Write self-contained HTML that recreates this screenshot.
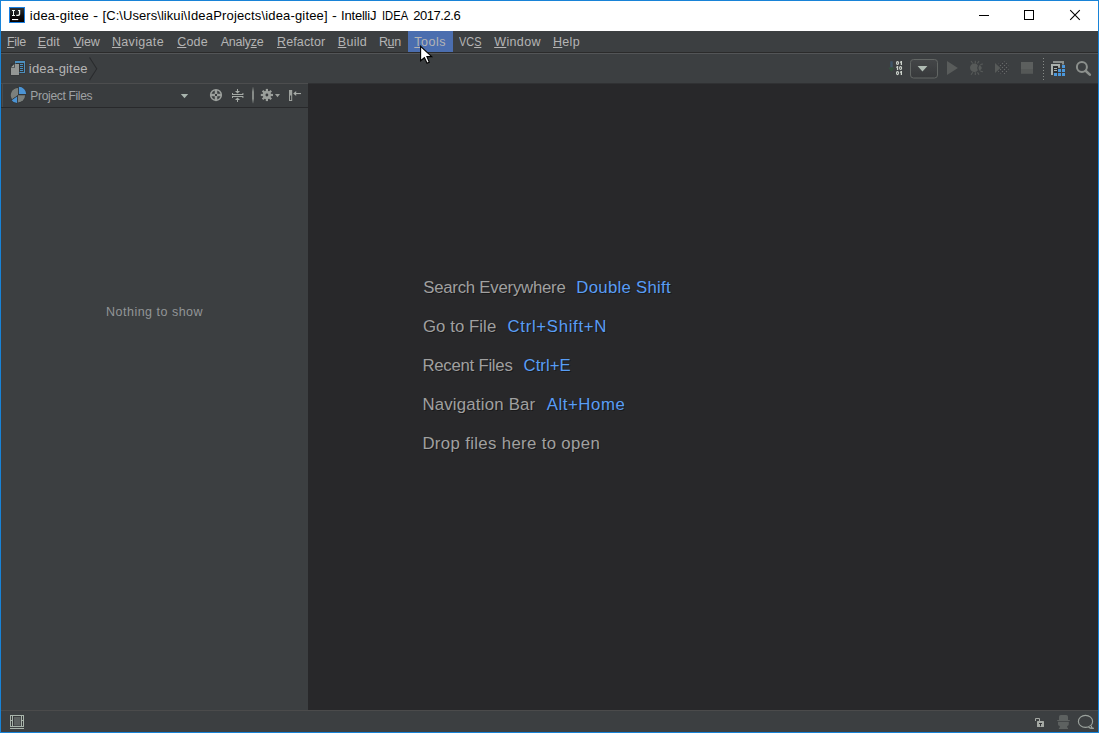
<!DOCTYPE html>
<html>
<head>
<meta charset="utf-8">
<title>idea-gitee</title>
<style>
html,body{margin:0;padding:0;}
body{width:1099px;height:733px;overflow:hidden;background:#1883d7;font-family:"Liberation Sans",sans-serif;position:relative;}
.abs{position:absolute;}
.t{position:absolute;white-space:pre;line-height:1;}
#win{left:1px;top:1px;width:1097px;height:731px;background:#3c3f41;overflow:hidden;}
/* coordinates inside #win are screen coords minus 1 */
#title{left:0;top:0;width:1097px;height:30px;background:#ffffff;}
#menubar{left:0;top:30px;width:1097px;height:21px;background:#3c3f41;}
#mline1{left:0;top:51px;width:1097px;height:1px;background:#2b2b2b;}
#mline2{left:0;top:52px;width:1097px;height:1px;background:#535557;}
#navbar{left:0;top:53px;width:1097px;height:29px;background:#3c3f41;}
#nline{left:0;top:82px;width:307px;height:1px;background:#4c4d4e;}
#hleft{left:1px;top:83px;width:1px;height:23px;background:#484b4d;}
#etop{left:307px;top:82px;width:790px;height:1px;background:#303133;}
#phead{left:0;top:83px;width:307px;height:23px;background:#393c3e;}
#pline{left:0;top:106px;width:307px;height:1px;background:#28292b;}
#pbody{left:0;top:107px;width:307px;height:602px;background:#3c3f41;}
#editor{left:307px;top:82px;width:790px;height:627px;background:#28282a;}
#sline{left:0;top:709px;width:1097px;height:1px;background:#4b4b4b;}
#status{left:0;top:710px;width:1097px;height:21px;background:#3c3f41;}
.m{color:#b4b4b4;}
.m u{text-decoration:underline;text-decoration-thickness:1px;text-underline-offset:1px;text-decoration-skip-ink:none;}
#mtools{left:407px;top:30px;width:45px;height:21px;background:#4b6eaf;}
.tt{color:#000;}
.e{color:#a0a0a0;text-shadow:1px 1px 0 rgba(0,0,0,0.39);}
.eb{color:#589df6;text-shadow:1px 1px 0 rgba(0,0,0,0.39);}
</style>
</head>
<body>
<div id="win" class="abs">
  <div id="title" class="abs"></div>
  <div id="menubar" class="abs"></div>
  <div id="mline1" class="abs"></div>
  <div id="mline2" class="abs"></div>
  <div id="navbar" class="abs"></div>
  <div id="nline" class="abs"></div>
  <div id="phead" class="abs"></div>
  <div id="pline" class="abs"></div>
  <div id="pbody" class="abs"></div>
  <div id="editor" class="abs"></div>
  <div id="etop" class="abs"></div>
  <div id="hleft" class="abs"></div>
  <div id="sline" class="abs"></div>
  <div id="status" class="abs"></div>

  <!-- title text -->
  <div id="tA" class="t tt" style="left:28.87px;top:8px;font-size:13px;letter-spacing:0.200px;">idea-gitee</div>
  <div id="tB" class="t tt" style="left:92.43px;top:8px;font-size:13px;letter-spacing:0.000px;transform:scaleX(1.1753);transform-origin:0 0;">-</div>
  <div id="tC" class="t tt" style="left:101.57px;top:8px;font-size:13px;letter-spacing:0.056px;">[C:\Users\likui</div>
  <div id="tD" class="t tt" style="left:182.43px;top:8px;font-size:13px;letter-spacing:0.164px;">\IdeaProjects\idea-gitee]</div>
  <div id="tE" class="t tt" style="left:331.16px;top:8px;font-size:13px;letter-spacing:0.000px;transform:scaleX(1.1155);transform-origin:0 0;">-</div>
  <div id="tF" class="t tt" style="left:340.09px;top:8px;font-size:13px;letter-spacing:-0.217px;">IntelliJ</div>
  <div id="tG" class="t tt" style="left:380.71px;top:8px;font-size:13px;letter-spacing:0.000px;transform:scaleX(0.8622);transform-origin:0 0;">IDEA</div>
  <div id="tH" class="t tt" style="left:412.16px;top:8px;font-size:13px;letter-spacing:-0.427px;">2017.2.6</div>

  <!-- menu -->
  <div id="mtools" class="abs"></div>
  <div id="m1" class="t m" style="left:6.04px;top:35px;font-size:12.5px;letter-spacing:-0.314px;"><u>F</u>ile</div>
  <div id="m2" class="t m" style="left:36.67px;top:35px;font-size:12.5px;letter-spacing:0.192px;"><u>E</u>dit</div>
  <div id="m3" class="t m" style="left:72.43px;top:35px;font-size:12.5px;letter-spacing:-0.184px;"><u>V</u>iew</div>
  <div id="m4" class="t m" style="left:110.95px;top:35px;font-size:12.5px;letter-spacing:0.333px;"><u>N</u>avigate</div>
  <div id="m5" class="t m" style="left:176.15px;top:35px;font-size:12.5px;letter-spacing:0.206px;"><u>C</u>ode</div>
  <div id="m6" class="t m" style="left:219.66px;top:35px;font-size:12.5px;letter-spacing:-0.248px;">Analy<u>z</u>e</div>
  <div id="m7" class="t m" style="left:276.01px;top:35px;font-size:12.5px;letter-spacing:0.126px;"><u>R</u>efactor</div>
  <div id="m8" class="t m" style="left:336.81px;top:35px;font-size:12.5px;letter-spacing:0.269px;"><u>B</u>uild</div>
  <div id="m9" class="t m" style="left:377.91px;top:35px;font-size:12.5px;letter-spacing:-0.355px;">R<u>u</u>n</div>
  <div id="m10" class="t m" style="left:413.32px;top:35px;font-size:12.5px;letter-spacing:0.520px;"><u>T</u>ools</div>
  <div id="m11" class="t m" style="left:458.20px;top:35px;font-size:12.5px;letter-spacing:0.000px;transform:scaleX(0.8707);transform-origin:0 0;">VC<u>S</u></div>
  <div id="m12" class="t m" style="left:493.19px;top:35px;font-size:12.5px;letter-spacing:0.385px;"><u>W</u>indow</div>
  <div id="m13" class="t m" style="left:552.01px;top:35px;font-size:12.5px;letter-spacing:0.309px;"><u>H</u>elp</div>

  <!-- nav -->
  <div id="nav" class="t" style="left:27.87px;top:61px;font-size:13px;letter-spacing:0.175px;color:#b4b4b4;">idea-gitee</div>

  <!-- project header -->
  <div id="pf" class="t" style="left:29.37px;top:89px;font-size:12px;letter-spacing:-0.318px;color:#9fa2a4;">Project Files</div>

  <div id="nts" class="t" style="left:105.02px;top:305px;font-size:12.5px;letter-spacing:0.495px;color:#929597;">Nothing to show</div>

  <!-- editor hints -->
  <div id="e1a" class="t e" style="left:422.24px;top:279px;font-size:16.75px;letter-spacing:-0.229px;">Search Everywhere</div>
  <div id="e1b" class="t eb" style="left:575.32px;top:279px;font-size:16.75px;letter-spacing:0.287px;">Double Shift</div>
  <div id="e2a" class="t e" style="left:421.98px;top:318px;font-size:16.75px;letter-spacing:0.071px;">Go to File</div>
  <div id="e2b" class="t eb" style="left:506.50px;top:318px;font-size:16.75px;letter-spacing:0.688px;">Ctrl+Shift+N</div>
  <div id="e3a" class="t e" style="left:421.41px;top:357px;font-size:16.75px;letter-spacing:-0.248px;">Recent Files</div>
  <div id="e3b" class="t eb" style="left:522.50px;top:357px;font-size:16.75px;letter-spacing:0.043px;">Ctrl+E</div>
  <div id="e4a" class="t e" style="left:421.41px;top:396px;font-size:16.75px;letter-spacing:0.220px;">Navigation Bar</div>
  <div id="e4b" class="t eb" style="left:545.68px;top:396px;font-size:16.75px;letter-spacing:0.589px;">Alt+Home</div>
  <div id="e5a" class="t e" style="left:421.41px;top:435px;font-size:16.75px;letter-spacing:0.356px;">Drop files here to open</div>
<svg class="abs" style="left:-1px;top:-1px;" width="1099" height="733" viewBox="0 0 1099 733">
  <defs>
    <linearGradient id="gIJ" x1="0" y1="0" x2="0" y2="1"><stop offset="0" stop-color="#2c3032"/><stop offset="0.6" stop-color="#0d0b0b"/><stop offset="1" stop-color="#050000"/></linearGradient>
    <linearGradient id="gSep" x1="0" y1="0" x2="0" y2="1"><stop offset="0" stop-color="#868b88" stop-opacity="0.1"/><stop offset="0.3" stop-color="#868b88" stop-opacity="1"/><stop offset="0.7" stop-color="#868b88" stop-opacity="1"/><stop offset="1" stop-color="#868b88" stop-opacity="0.1"/></linearGradient>
    <linearGradient id="gCombo" x1="0" y1="0" x2="0" y2="1"><stop offset="0" stop-color="#444648"/><stop offset="1" stop-color="#37393b"/></linearGradient>
    <linearGradient id="gArr" x1="0" y1="0" x2="0" y2="1"><stop offset="0" stop-color="#3f5b76"/><stop offset="0.5" stop-color="#3f5f78"/><stop offset="0.62" stop-color="#31563a"/><stop offset="1" stop-color="#31563a"/></linearGradient>
    <pattern id="dots" x="996" y="61" width="4" height="4" patternUnits="userSpaceOnUse"><rect x="0" y="0" width="4" height="4" fill="#37393c"/><rect x="-0.15" y="-0.15" width="1.3" height="1.3" fill="#666968"/><rect x="3.85" y="-0.15" width="0.3" height="1.3" fill="#666968"/><rect x="-0.15" y="3.85" width="1.3" height="0.3" fill="#666968"/><rect x="1.85" y="1.85" width="1.3" height="1.3" fill="#666968"/></pattern>
  </defs>

  <!-- ===== title bar app icon ===== -->
  <g id="i-app">
    <rect x="9" y="7" width="16" height="16" fill="#1a7fe0"/>
    <rect x="10" y="8" width="14" height="14" fill="url(#gIJ)"/>
    <!-- I -->
    <path d="M12 10h3v1h-1v4h1v1h-3v-1h1v-4h-1z" fill="#f2f7f2"/>
    <!-- J -->
    <path d="M18 10h2.2v4.2q0 1.8-1.9 1.8h-2v-1.2h1.5q1.1 0 1.1-1v-2.8h-0.9z" fill="#f2f7f2"/>
    <rect x="12" y="19" width="6.2" height="1.1" fill="#ffffff"/>
  </g>

  <!-- ===== window controls ===== -->
  <g id="i-winctl" fill="none" stroke="#000" stroke-width="1">
    <path d="M979 15.5h10"/>
    <rect x="1024.5" y="10.5" width="9" height="9"/>
    <path d="M1070.2 10.2l9.6 9.6M1079.8 10.2l-9.6 9.6" stroke-width="1.1"/>
  </g>

  <!-- ===== nav bar module icon ===== -->
  <g id="i-nav">
    <rect x="14.6" y="60.6" width="10.8" height="12.8" fill="#303335"/>
    <rect x="15" y="61" width="10" height="12" fill="#4c8fbe"/>
    <rect x="16" y="63" width="8" height="9" fill="#323537"/>
    <rect x="20" y="64" width="3" height="1" fill="#4c8fbe"/><rect x="20" y="66" width="3" height="1" fill="#4c8fbe"/><rect x="20" y="68" width="3" height="1" fill="#4c8fbe"/><rect x="20" y="70" width="3" height="1" fill="#4c8fbe"/>
    <path d="M10.5 63.5h9v12h-9z" fill="#303335"/>
    <path d="M14.8 64H19v11H11v-7.2h3.8z" fill="#939694"/>
    <path d="M14.1 64.2v3h-3z" fill="#9fa29f"/>
  </g>
  <!-- nav chevron -->
  <path d="M89.6 57.4L96.9 68.8L89.6 80.2" fill="none" stroke="#2a2c2e" stroke-width="1.3"/>
  <path d="M90.5 57.2L97.8 68.8L90.5 80.4" fill="none" stroke="#424547" stroke-width="0.5"/>

  <!-- ===== pie icon ===== -->
  <g id="i-pie">
    <g stroke="#313436" stroke-width="1" paint-order="stroke" stroke-linejoin="round">
    <path d="M18 95.1V87.9A7.2 7.2 0 0 0 12.03 99.13Z" fill="#7b807d"/>
    <path d="M18.9 94.1V86.8A7.3 7.3 0 0 1 26.2 94.1Z" fill="#4b94d5"/>
    <path d="M18 95.3H25.1A7.1 7.1 0 0 1 18 102.4Z" fill="#7b807d"/>
    <path d="M17.1 96.6V103.1A6.5 6.5 0 0 1 11.7 100.2Z" fill="#4b94d5"/>
    </g>
  </g>

  <!-- ===== tool window header icons ===== -->
  <path d="M180.8 94h7.4l-3.7 4.2z" fill="#a9b5ae"/>
  <!-- target -->
  <g id="i-target">
    <circle cx="216" cy="95" r="5.35" fill="none" stroke="#9b9f9c" stroke-width="1.55"/>
    <path d="M214.75 90h2.5v4h-2.5zM214.75 96h2.5v4h-2.5zM211 93.75h4v2.5h-4zM217 93.75h4v2.5h-4z" fill="#9b9f9c"/>
  </g>
  <!-- collapse all -->
  <g id="i-collapse" fill="#a5aaa6">
    <rect x="237" y="89" width="1" height="4"/><path d="M235 91h5l-2.5 2.6z"/>
    <rect x="232" y="94" width="11.4" height="1"/><rect x="232" y="93" width="1" height="1"/><rect x="242.4" y="93" width="1" height="1"/>
    <rect x="232" y="96" width="11.4" height="1"/><rect x="232" y="97" width="1" height="1"/><rect x="242.4" y="97" width="1" height="1"/>
    <rect x="237" y="98" width="1" height="4"/><path d="M235 100h5l-2.5-2.6z"/>
  </g>
  <rect x="252" y="87" width="2" height="16.5" fill="url(#gSep)"/>
  <!-- gear -->
  <g id="i-gear" fill="#9b9f9b">
    <g transform="translate(266.9 95)">
      <circle r="4.2"/>
      <rect x="-1.1" y="-6.1" width="2.2" height="12.2"/>
      <rect x="-1.1" y="-6.1" width="2.2" height="12.2" transform="rotate(45)"/>
      <rect x="-1.1" y="-6.1" width="2.2" height="12.2" transform="rotate(90)"/>
      <rect x="-1.1" y="-6.1" width="2.2" height="12.2" transform="rotate(135)"/>
      <circle r="1.4" fill="#393c3e"/>
    </g>
    <path d="M275 94h5l-2.5 3.2z"/>
  </g>
  <!-- hide -->
  <g id="i-hide">
    <rect x="289" y="90" width="3.2" height="11" fill="#9da19d"/>
    <rect x="290" y="95.5" width="1.2" height="4.5" fill="#393c3e"/>
    <rect x="294" y="93" width="7" height="1.1" fill="#a5aaa6"/>
    <path d="M293.2 93.5l3-2.6v5.2z" fill="#a5aaa6"/>
  </g>

  <!-- ===== main toolbar (right) ===== -->
  <g id="i-make">
    <path d="M890.3 61.3h2.4v6.4h1.9l-3.1 4.1l-3.1-4.1h1.9z" fill="url(#gArr)" opacity="0.72"/>
    <g fill="#cdd3cc">
      <!-- row 1: 0 1 -->
      <ellipse cx="897.5" cy="63" rx="1.0" ry="1.45" fill="none" stroke="#cdd3cc" stroke-width="1.15"/><path d="M899.9 61.9l1-0.9h1.1v4h-1.3v-2.6l-0.8 0.5z"/>
      <!-- row 2: 1 0 -->
      <path d="M896.1 66.9l1-0.9h1.1v4h-1.3v-2.6l-0.8 0.5z"/><ellipse cx="900.6" cy="68" rx="1.0" ry="1.45" fill="none" stroke="#cdd3cc" stroke-width="1.15"/>
      <!-- row 3: 0 1 -->
      <ellipse cx="897.5" cy="73.1" rx="1.0" ry="1.45" fill="none" stroke="#cdd3cc" stroke-width="1.15"/><path d="M899.9 72l1-0.9h1.1v4h-1.3v-2.6l-0.8 0.5z"/>
    </g>
  </g>
  <rect x="910.5" y="59.5" width="27" height="18.5" rx="3" ry="3" fill="url(#gCombo)" stroke="#626664" stroke-width="1"/>
  <path d="M917.6 66h9.8l-4.9 5.4z" fill="#afbbb3"/>
  <path d="M947 61l10.9 7l-10.9 7z" fill="#595c5b"/>
  <!-- bug -->
  <g id="i-bug" fill="#575a59" stroke="none">
    <path d="M977.89 65.43A4.3 4.3 0 1 0 977.89 70.17A4.4 4.4 0 0 1 977.89 65.43Z"/>
    <path d="M979.3 64.9Q984.4 67.8 979.3 70.7Q977.6 67.8 979.3 64.9Z"/>
    <g stroke="#575a59" stroke-width="1.1" fill="none">
      <path d="M971 61l1.8 2.5M975.3 60.8v2.8M979 61l-1.5 2.4"/>
      <path d="M971 74.8l1.8-2.5M975.3 75v-2.8M979 74.8l-1.5-2.4"/>
      <path d="M980.3 65.2q0.7-1.2 2.7-1.2M980.3 70.6q0.7 1.2 2.7 1.2"/>
    </g>
  </g>
  <!-- coverage -->
  <g id="i-cov">
    <path d="M995 63l5.4 4.9l-5.4 5z" fill="#575a59"/>
    <path d="M1003 61A6.6 6.9 0 0 1 1003 74.7A9 9 0 0 1 997.8 71L1002 67.8L997.8 64.6A9 9 0 0 1 1003 61Z" fill="url(#dots)"/>
  </g>
  <!-- stop -->
  <rect x="1021" y="62" width="12" height="7" fill="#5c5f5e"/>
  <rect x="1021" y="69" width="12" height="4.8" fill="#555857"/>
  <!-- dotted separator -->
  <g fill="#878b88"><rect x="1043" y="58" width="1" height="1"/><rect x="1043" y="61" width="1" height="1"/><rect x="1043" y="64" width="1" height="1"/><rect x="1043" y="67" width="1" height="1"/><rect x="1043" y="70" width="1" height="1"/><rect x="1043" y="73" width="1" height="1"/><rect x="1043" y="76" width="1" height="1"/><rect x="1043" y="79" width="1" height="1"/></g>
  <!-- project structure -->
  <g id="i-ps">
    <path d="M1053 61h11v3.6h-2v-1.6h-9z" fill="#8b8f8c"/>
    <path d="M1051 64h9v3.8h-2v-1.8h-5v9h-2z" fill="#aab0ac"/>
    <rect x="1053" y="66" width="5" height="7" fill="#2d2f31"/>
    <rect x="1054" y="68" width="3" height="1" fill="#aab0ac"/><rect x="1054" y="70" width="3" height="1" fill="#aab0ac"/>
    <g fill="#4b98dc">
      <rect x="1062" y="65" width="3" height="3"/>
      <rect x="1058" y="69" width="3" height="3"/><rect x="1062" y="69" width="3" height="3"/>
      <rect x="1054" y="73" width="3" height="3"/><rect x="1058" y="73" width="3" height="3"/><rect x="1062" y="73" width="3" height="3"/>
    </g>
  </g>
  <!-- search -->
  <g id="i-search" fill="none" stroke="#8c908d">
    <circle cx="1081.9" cy="66.9" r="5" stroke-width="2"/>
    <path d="M1085.6 70.8l4.2 3.8" stroke-width="2.6" stroke-linecap="round"/>
  </g>

  <!-- ===== status bar ===== -->
  <g id="i-tw">
    <rect x="11" y="716" width="12" height="10" fill="#37393b"/>
    <rect x="10.5" y="715.5" width="13" height="11" fill="none" stroke="#a8b4aa" stroke-width="1"/>
    <rect x="12" y="716" width="1" height="10" fill="#a8b4aa"/><rect x="21" y="716" width="1" height="10" fill="#a8b4aa"/>
    <rect x="11" y="720" width="1" height="1" fill="#a8b4aa"/><rect x="22" y="720" width="1" height="1" fill="#a8b4aa"/>
    <rect x="14" y="717" width="6.5" height="8.6" fill="#5c6160"/>
    <rect x="10" y="728" width="14" height="1" fill="#a8b4aa"/>
  </g>
  <g id="i-lock">
    <path d="M1035.5 721v-2.5h4v2.5" fill="none" stroke="#a5a9a4" stroke-width="1"/>
    <rect x="1037" y="721" width="7" height="6" rx="0.6" fill="#a5a9a4"/>
    <path d="M1039 723h3v1h-1v2.2h-1v-2.2h-1z" fill="#323436"/>
  </g>
  <g id="i-hector" fill="#5d6160">
    <path d="M1059 720v-3.2q0-1.8 1.8-1.8h5.4q1.8 0 1.8 1.8v3.2z"/>
    <rect x="1057.2" y="720" width="12.6" height="1"/>
    <path d="M1058 721.8h10.8v2.4q0 1.4-1.6 1.8v1.8h0.8v1.2h-9.1v-1.2h0.9v-1.8q-1.8-0.4-1.8-1.8z"/>
  </g>
  <g id="i-bubble" fill="none" stroke="#9ca39e" stroke-width="1.15">
    <ellipse cx="1085.5" cy="721.4" rx="7.1" ry="6.0"/>
    <path d="M1088.6 727.2Q1090.6 728.8 1093.8 728.4Q1092 728 1091.6 727.2L1091.3 725.6" fill="#3c3f41"/>
  </g>

  <!-- mouse cursor -->
  <path d="M420.6 46.3V60.8L424.4 57.7L427.1 63.2L429.3 62.3L426.9 56.6H431.7Z" fill="#fff" stroke="#000" stroke-width="1.1" stroke-linejoin="miter"/>
</svg>

</div>
</body>
</html>
